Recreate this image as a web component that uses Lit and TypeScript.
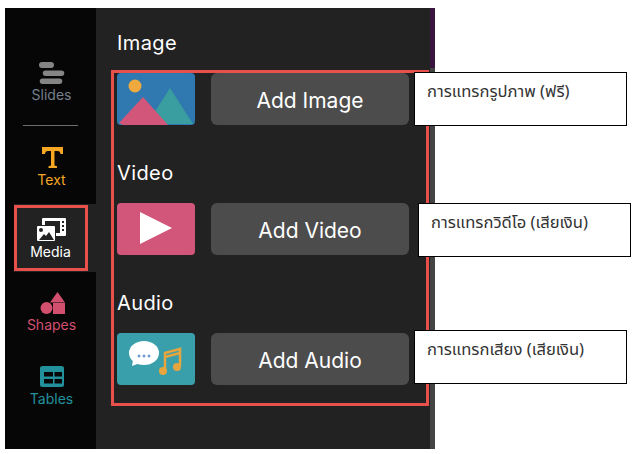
import { LitElement, css, html, svg } from 'lit';
import { customElement } from 'lit/decorators.js';

const navIcons = {
  slides: svg`<path d="M4 0h9a3 3 0 0 1 0 6H4a3 3 0 0 1 0-6zM7.500 8.500h16a2.700 2.700 0 0 1 0 5.500h-16a2.700 2.700 0 0 1 0-5.500zM4.500 16.500h17a2.700 2.700 0 0 1 0 5.500h-17a2.700 2.700 0 0 1 0-5.500z" fill="#858585"/>`,
  text: svg`<path transform="translate(3 0)" d="M1 0h21v7h-2.500c-.3-2-1-3-3-3h-3v14.500l2.500.7V21H7.500v-1.800l2.500-.7V4H7c-2 0-2.700 1-3 3H1z" fill="#f5a623"/>`,
  media: svg`<rect x="6" y="0" width="24" height="18" rx="1" fill="#fff"/><rect x="9" y="3" width="15" height="12" fill="#222"/><g fill="#222"><rect x="26" y="3" width="2" height="2"/><rect x="26" y="7" width="2" height="2"/><rect x="26" y="11" width="2" height="2"/></g><rect x="0" y="7" width="20" height="17" rx="1" fill="#222"/><rect x="1" y="8" width="18" height="15" rx="1" fill="#fff"/><circle cx="5" cy="12" r="2" fill="#222"/><path d="M3 22l5-6 2 2 3-4 5 8z" fill="#222"/>`,
  shapes: svg`<path d="M19.500 0l7.500 10.500H12z" fill="#d2506e"/><circle cx="8.500" cy="16" r="6" fill="#d2506e"/><rect x="15" y="11" width="12" height="11" fill="#d2506e"/>`,
  tables: svg`<rect x="2" y="0" width="24" height="21" rx="2.500" fill="#23919c"/><g fill="#060606"><rect x="6" y="6" width="9" height="4.500"/><rect x="16.500" y="6" width="7.500" height="4.500"/><rect x="6" y="13" width="9" height="4.500"/><rect x="16.500" y="13" width="7.500" height="4.500"/></g>`,
};

const nav = [
  { label: 'Slides', key: 'slides', color: '#75808c', w: 27, h: 22 },
  { label: 'Text', key: 'text', color: '#f5a623', w: 27, h: 22 },
  { label: 'Media', key: 'media', color: '#fff', w: 30, h: 24 },
  { label: 'Shapes', key: 'shapes', color: '#d2506e', w: 27, h: 22 },
  { label: 'Tables', key: 'tables', color: '#23919c', w: 27, h: 22 },
] as const;

const thumbImage = svg`<svg viewBox="0 0 78 52" width="78" height="52"><rect width="78" height="52" rx="4" fill="#2f78b0"/><circle cx="18" cy="13" r="6.500" fill="#eeaa3e"/><path d="M30 51l23-36 23 36z" fill="#3a9ea0"/><path d="M2 50l24-26 25 28H6z" fill="#d2567a"/></svg>`;
const thumbVideo = svg`<svg viewBox="0 0 78 52" width="78" height="52"><rect width="78" height="52" rx="4" fill="#d2567a"/><path d="M23 9l32 16-32 16z" fill="#fff"/></svg>`;
const thumbAudio = svg`<svg viewBox="0 0 78 52" width="78" height="52"><rect width="78" height="52" rx="4" fill="#39a0ab"/><ellipse cx="27" cy="20" rx="15" ry="12" fill="#fff"/><path d="M16 27l-1 6 8-3z" fill="#fff"/><g fill="#6f9fd0"><circle cx="22" cy="23" r="1.500"/><circle cx="27" cy="23" r="1.500"/><circle cx="32" cy="23" r="1.500"/></g><path d="M48 37V20l15-4v17M48 24l15-4" fill="none" stroke="#e6a53f" stroke-width="2.500"/><circle cx="46" cy="38" r="4" fill="#e6a53f"/><circle cx="60" cy="34" r="4" fill="#e6a53f"/></svg>`;

const sections = [
  { title: 'Image', add: 'Add Image', thumb: thumbImage },
  { title: 'Video', add: 'Add Video', thumb: thumbVideo },
  { title: 'Audio', add: 'Add Audio', thumb: thumbAudio },
];

@customElement('app-root')
export class AppRoot extends LitElement {
  static override styles = css`
    :host {
      display: block;
      position: relative;
      width: 634px;
      height: 454px;
      background: #fff;
      font-family: 'Inter', 'Noto Sans', sans-serif;
      overflow: hidden;
    }

    .editor {
      display: flex;
      margin: 8px 0 0 5px;
      width: 430px;
      height: 441px;
      background: #222;
    }

    .rail {
      flex: 0 0 91px;
      display: flex;
      flex-direction: column;
      background: #060606;
      padding-top: 54px;
      box-sizing: border-box;
    }

    .tab {
      display: flex;
      flex-direction: column;
      align-items: center;
      box-sizing: border-box;
      font-size: 14px;
      line-height: 17px;
      padding-left: 2px;
    }

    .tab svg {
      display: block;
      margin-bottom: 2px;
    }

    .tab.slides {
      height: 63px;
    }

    .rule {
      flex: none;
      height: 1px;
      width: 55px;
      margin: 0 0 21px 18px;
      background: #6c6c6c;
    }

    .tab.text {
      height: 57px;
    }

    .tab.media {
      height: 68px;
      padding: 14px 9px 0 0;
      margin-left: 9px;
      background: #222;
    }

    .tab.media svg {
      margin-bottom: 1px;
    }

    .tab.shapes {
      height: 74px;
      padding-top: 20px;
    }

    .tab.tables {
      height: 74px;
      padding-top: 20px;
    }

    .panel {
      flex: 1;
      position: relative;
      padding: 23px 0 0 21px;
      color: #fff;
    }

    .panel::after {
      content: '';
      position: absolute;
      top: 0;
      right: 0;
      bottom: 0;
      width: 5px;
      background: linear-gradient(#3a1540 0 60px, #444 60px);
    }

    .section {
      height: 130px;
    }

    .title {
      font-size: 20px;
      line-height: 24px;
      letter-spacing: 0.4px;
      margin-bottom: 18px;
    }

    .row {
      display: flex;
      align-items: center;
      gap: 16px;
    }

    .row svg {
      display: block;
    }

    .add {
      width: 198px;
      height: 52px;
      padding-top: 2px;
      box-sizing: border-box;
      border-radius: 6px;
      background: #4c4c4c;
      display: flex;
      align-items: center;
      justify-content: center;
      font-size: 21px;
      color: #fff;
    }

    .frame {
      position: absolute;
      box-sizing: border-box;
      border: 3px solid #e8504c;
    }

    .frame.content {
      left: 111px;
      top: 70px;
      width: 318px;
      height: 336px;
    }

    .frame.tab-mark {
      left: 14px;
      top: 205px;
      width: 74px;
      height: 66px;
    }

    .note {
      position: absolute;
      box-sizing: border-box;
      width: 213px;
      height: 54px;
      padding: 7px 12px;
      border: 1px solid #000;
      background: #fff;
      color: #333;
      font-family: 'Noto Sans', 'Noto Sans Thai', sans-serif;
      font-size: 16.6px;
      line-height: 22px;
      white-space: nowrap;
    }
  `;

  override render() {
    return html`
      <div class="editor">
        <nav class="rail">
          ${nav.map(
            (item, i) => html`
              <div class="tab ${item.key}" style="color: ${item.color}">
                <svg viewBox="0 0 ${item.w} ${item.h}" width=${item.w} height=${item.h}>${navIcons[item.key]}</svg>
                ${item.label}
              </div>
              ${i === 0 ? html`<div class="rule"></div>` : ''}
            `,
          )}
        </nav>
        <div class="panel">
          ${sections.map(
            (s) => html`
              <section class="section">
                <div class="title">${s.title}</div>
                <div class="row">${s.thumb}<div class="add">${s.add}</div></div>
              </section>
            `,
          )}
        </div>
      </div>
      <div class="frame content"></div>
      <div class="frame tab-mark"></div>
      <div class="note" style="left: 414px; top: 72px">การแทรกรูปภาพ (ฟรี)</div>
      <div class="note" style="left: 418px; top: 203px">การแทรกวิดีโอ (เสียเงิน)</div>
      <div class="note" style="left: 414px; top: 330px">การแทรกเสียง (เสียเงิน)</div>
    `;
  }
}
